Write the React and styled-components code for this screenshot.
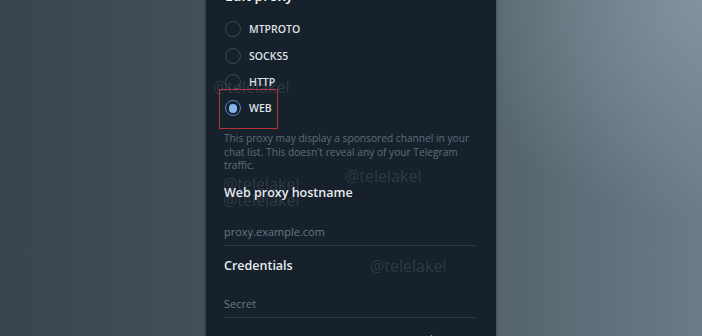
import React from "react";
import styled, { createGlobalStyle } from "styled-components";

const GlobalStyle = createGlobalStyle`
  html, body { margin: 0; padding: 0; }
  body { overflow: hidden; font-family: "Open Sans", "Noto Sans", sans-serif; }
`;

const Page = styled.div`
  position: relative;
  width: 702px;
  height: 336px;
  overflow: hidden;
  display: flex;
  justify-content: center;
  align-items: flex-start;
  background:
    radial-gradient(ellipse 260px 220px at 702px 0px, rgba(150,166,176,0.55), rgba(150,166,176,0) 100%),
    linear-gradient(90deg, #39444c 0%, #424e56 25%, #56646e 72%, #6c7b86 100%);
`;

const Dialog = styled.div`
  position: relative;
  width: 290px;
  box-sizing: border-box;
  margin-top: -14px;
  padding: 0 19px 0 18px;
  background: #17212b;
  box-shadow: 0 0 3px rgba(0,0,0,0.45);
  display: flex;
  flex-direction: column;
`;

const Title = styled.div`
  font-size: 14px;
  font-weight: 600;
  line-height: 20px;
  height: 20px;
  color: #f3f5f7;
  padding-left: 1px;
`;

const RadioList = styled.div`
  margin-top: 10px;
  display: flex;
  flex-direction: column;
`;

const RadioRow = styled.div`
  height: 26.4px;
  display: flex;
  align-items: center;
`;

const RadioOption = styled.div`
  position: relative;
  display: inline-flex;
  align-items: center;
  gap: 8px;
  padding-left: 1px;
  &::after {
    content: "";
    display: ${(p) => (p.$highlighted ? "block" : "none")};
    position: absolute;
    left: -5px;
    right: -6px;
    top: -11px;
    bottom: -13px;
    border: 1px solid #b4323b;
  }
`;

const Circle = styled.span`
  position: relative;
  width: 16px;
  height: 16px;
  box-sizing: border-box;
  border-radius: 50%;
  border: 1.6px solid ${(p) => (p.$checked ? "#4f86c2" : "#3a4652")};
  &::before {
    content: "";
    display: ${(p) => (p.$checked ? "block" : "none")};
    position: absolute;
    left: 50%;
    top: 50%;
    width: 8.5px;
    height: 8.5px;
    margin: -4.25px 0 0 -4.25px;
    border-radius: 50%;
    background: #84b4ea;
  }
`;

const RadioLabel = styled.span`
  font-size: 10.5px;
  font-weight: 600;
  color: #dde2e7;
  line-height: 14px;
`;

const Description = styled.p`
  margin: 10.5px 0 0;
  font-size: 10.2px;
  line-height: 13.5px;
  color: #5e6d7b;
`;

const Heading = styled.div`
  margin-top: ${(p) => p.$top}px;
  font-size: 12.5px;
  font-weight: 600;
  line-height: 18px;
  color: #e7ebef;
`;

const Field = styled.div`
  margin-top: ${(p) => p.$top}px;
  font-size: 11px;
  line-height: 16px;
  color: #687785;
  padding-bottom: 5px;
  border-bottom: 1px solid #2a3641;
`;

const ButtonRow = styled.div`
  margin-top: 15px;
  display: flex;
  justify-content: flex-end;
  gap: 20px;
  margin-right: -3px;
  padding-bottom: 10px;
`;

const TextButton = styled.span`
  font-size: 12px;
  font-weight: 600;
  line-height: 16px;
  color: #5a94d0;
`;

const Watermark = styled.span`
  position: absolute;
  left: ${(p) => p.$x}px;
  top: ${(p) => p.$y}px;
  font-size: 16px;
  line-height: 20px;
  font-weight: 400;
  color: rgba(210, 222, 232, 0.14);
  pointer-events: none;
  white-space: nowrap;
`;

const options = ["MTPROTO", "SOCKS5", "HTTP", "WEB"];

export default function App() {
  return (
    <>
      <GlobalStyle />
      <Page>
        <Dialog>
          <Title>Edit proxy</Title>
          <RadioList>
            {options.map((o) => (
              <RadioRow key={o}>
                <RadioOption $highlighted={o === "WEB"}>
                  <Circle $checked={o === "WEB"} />
                  <RadioLabel>{o}</RadioLabel>
                </RadioOption>
              </RadioRow>
            ))}
          </RadioList>
          <Description>
            This proxy may display a sponsored channel in your
            <br />
            chat list. This doesn't reveal any of your Telegram
            <br />
            traffic.
          </Description>
          <Heading $top={11}>Web proxy hostname</Heading>
          <Field $top={22}>proxy.example.com</Field>
          <Heading $top={11}>Credentials</Heading>
          <Field $top={21}>Secret</Field>
          <ButtonRow>
            <TextButton>Cancel</TextButton>
            <TextButton>Save</TextButton>
          </ButtonRow>
        </Dialog>
        <Watermark $x={213} $y={77}>@telelakel</Watermark>
        <Watermark $x={345} $y={166}>@telelakel</Watermark>
        <Watermark $x={223} $y={174}>@telelakel</Watermark>
        <Watermark $x={223} $y={190}>@telelakel</Watermark>
        <Watermark $x={370} $y={256}>@telelakel</Watermark>
      </Page>
    </>
  );
}
